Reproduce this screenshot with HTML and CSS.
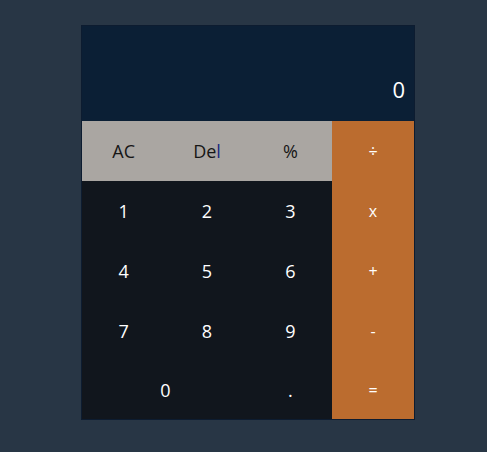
FILE: index.html
```html
<!DOCTYPE html>
<html lang="en">
<head>
<meta charset="utf-8">
<title>Calculator</title>
<link rel="stylesheet" href="styles.css">
</head>
<body>
<div class="calc">
  <div class="display">0</div>
  <div class="keys">
    <button class="key fn">AC</button>
    <button class="key fn">De<span class="caret">l</span></button>
    <button class="key fn">%</button>
    <button class="key op">÷</button>
    <button class="key num">1</button>
    <button class="key num">2</button>
    <button class="key num">3</button>
    <button class="key op">x</button>
    <button class="key num">4</button>
    <button class="key num">5</button>
    <button class="key num">6</button>
    <button class="key op">+</button>
    <button class="key num">7</button>
    <button class="key num">8</button>
    <button class="key num">9</button>
    <button class="key op">-</button>
    <button class="key num wide">0</button>
    <button class="key num">.</button>
    <button class="key op">=</button>
  </div>
</div>
</body>
</html>
```

FILE: styles.css
```css
* { box-sizing: border-box; }
html, body {
  margin: 0;
  height: 100%;
  background: #283645;
}
body {
  padding: 25px 0 0 81px;
  font-family: "Open Sans", "Noto Sans", sans-serif;
}
.calc {
  width: 334px;
  border: 1px solid #0d1c30;
  background: #11161d;
}
.display {
  height: 95px;
  background: #0b1f35;
  color: #ffffff;
  font-size: 22px;
  display: flex;
  align-items: flex-end;
  justify-content: flex-end;
  padding: 0 9px 21px 0;
  line-height: 1;
}
.keys {
  display: grid;
  grid-template-columns: 1fr 1fr 1fr 82px;
  grid-template-rows: repeat(4, 60px) 58px;
}
.key {
  border: 0;
  margin: 0;
  padding: 0;
  font-family: inherit;
  font-size: 18px;
  display: flex;
  align-items: center;
  justify-content: center;
}
.fn { background: #aaa6a2; color: #161616; }
.num { background: #11161d; color: #ffffff; }
.op { background: #bb6c2f; color: #ffffff; font-size: 16px; }
.wide { grid-column: span 2; }
.caret { color: #1a2a80; }
```
